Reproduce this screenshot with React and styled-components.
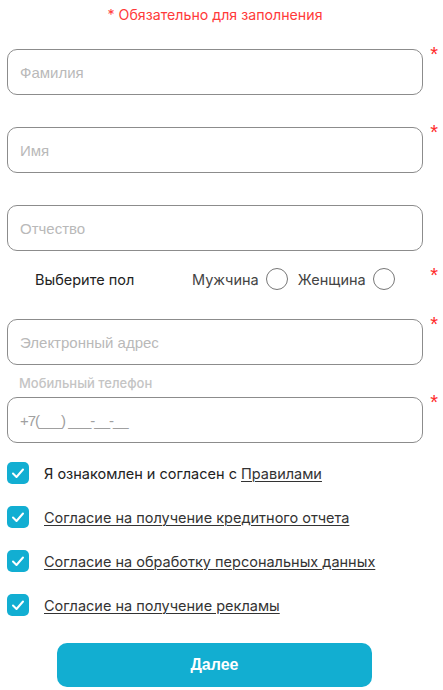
import React from "react";
import styled, { createGlobalStyle } from "styled-components";

const Global = createGlobalStyle`
  html, body { margin: 0; padding: 0; background: #fff; }
  body { font-family: Inter, "Noto Sans", sans-serif; }
  * { box-sizing: border-box; }
`;

const Page = styled.div`
  width: 443px;
  padding: 0 0 0 7px;
`;

const Form = styled.form`
  width: 416px;
  display: flex;
  flex-direction: column;
`;

const Required = styled.div`
  text-align: center;
  color: #ff3a3a;
  font-family: Inter, sans-serif;
  font-size: 14.2px;
  line-height: 18px;
  padding-top: 6px;
  height: 49px;
`;

const Field = styled.div`
  position: relative;
  margin-top: ${(p) => p.$mt || 0}px;
`;

const Input = styled.input`
  display: block;
  width: 416px;
  height: 46px;
  border: 1px solid #8c8c8c;
  border-radius: 10px;
  padding: 0 12px;
  font-family: "Liberation Sans", Arial, sans-serif;
  font-size: 15px;
  letter-spacing: ${(p) => p.$ls || 0}px;
  color: #333;
  outline: none;
  background: #fff;
  &::placeholder { color: ${(p) => p.$ph || "#b9b9b9"}; }
`;

const Star = styled.span`
  position: absolute;
  right: -15px;
  top: ${(p) => p.$top ?? -5}px;
  color: #ff2a2a;
  font-family: "Liberation Sans", Arial, sans-serif;
  font-size: 20px;
  line-height: 20px;
`;

const GenderRow = styled.div`
  position: relative;
  height: 60px;
  margin-top: 8px;
  display: flex;
  align-items: center;
  padding-left: 28px;
  padding-bottom: 20px;
  font-family: Inter, sans-serif;
  font-size: 14.5px;
  color: #222;
`;

const GenderLabel = styled.span`
  width: 157px;
`;

const Option = styled.label`
  display: flex;
  align-items: center;
  gap: 7px;
  color: #444;
  margin-right: 10px;
`;

const Radio = styled.span`
  width: 22px;
  height: 22px;
  border: 1.5px solid #777;
  border-radius: 50%;
`;

const PhoneLabel = styled.div`
  font-family: Inter, sans-serif;
  font-weight: 500;
  font-size: 13px;
  color: #c4c4c4;
  padding-left: 12px;
  margin-top: 11px;
  height: 21px;
  line-height: 14px;
`;

const Checks = styled.div`
  display: flex;
  flex-direction: column;
  gap: 22px;
  margin-top: 19px;
`;

const CheckRow = styled.div`
  display: flex;
  align-items: center;
  gap: 15px;
  font-family: Inter, sans-serif;
  font-size: 14.5px;
  color: #222;
`;

const Box = styled.span`
  width: 22px;
  height: 22px;
  border-radius: 5px;
  background: #12aed2;
  display: flex;
  align-items: center;
  justify-content: center;
  flex: none;
`;

const Link = styled.a`
  color: #333;
  text-decoration: underline;
  text-underline-offset: 2px;
  text-decoration-thickness: 1px;
`;

const ButtonWrap = styled.div`
  display: flex;
  padding-left: 50px;
  margin-top: 27px;
`;

const Button = styled.button`
  width: 315px;
  height: 44px;
  border: none;
  border-radius: 10px;
  background: #12aed1;
  color: #fff;
  font-family: "Liberation Sans", Arial, sans-serif;
  font-weight: bold;
  font-size: 16px;
`;

const Check = () => (
  <Box>
    <svg width="14" height="14" viewBox="0 0 14 14">
      <polyline points="2,7.5 5.5,11 12,3.5" fill="none" stroke="#fff" strokeWidth="2" strokeLinecap="round" strokeLinejoin="round" />
    </svg>
  </Box>
);

export default function App() {
  return (
    <Page>
      <Global />
      <Form>
        <Required>* Обязательно для заполнения</Required>
        <Field>
          <Input placeholder="Фамилия" />
          <Star>*</Star>
        </Field>
        <Field $mt={32}>
          <Input placeholder="Имя" />
          <Star>*</Star>
        </Field>
        <Field $mt={32}>
          <Input placeholder="Отчество" />
        </Field>
        <GenderRow>
          <GenderLabel>Выберите пол</GenderLabel>
          <Option>Мужчина <Radio /></Option>
          <Option>Женщина <Radio /></Option>
          <Star $top={6}>*</Star>
        </GenderRow>
        <Field>
          <Input placeholder="Электронный адрес" />
          <Star>*</Star>
        </Field>
        <PhoneLabel>Мобильный телефон</PhoneLabel>
        <Field>
          <Input placeholder="+7(___) ___-__-__" $ph="#a0a0a0" $ls={-1} />
          <Star>*</Star>
        </Field>
        <Checks>
          <CheckRow><Check /><span>Я ознакомлен и согласен с <Link>Правилами</Link></span></CheckRow>
          <CheckRow><Check /><Link>Согласие на получение кредитного отчета</Link></CheckRow>
          <CheckRow><Check /><Link>Согласие на обработку персональных данных</Link></CheckRow>
          <CheckRow><Check /><Link>Согласие на получение рекламы</Link></CheckRow>
        </Checks>
        <ButtonWrap>
          <Button type="button">Далее</Button>
        </ButtonWrap>
      </Form>
    </Page>
  );
}
